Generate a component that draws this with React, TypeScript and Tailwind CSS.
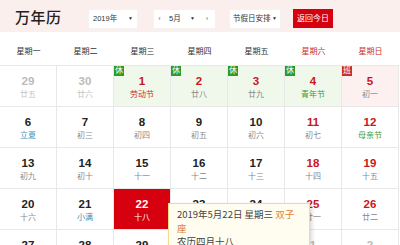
import React from "react";

type Day = {
  n: number;
  l: string;
  muted?: boolean;
  fest?: "red" | "green" | "teal";
  rest?: boolean;
  work?: boolean;
  today?: boolean;
};

const weeks: Day[][] = [
  [
    { n: 29, l: "廿五", muted: true },
    { n: 30, l: "廿六", muted: true },
    { n: 1, l: "劳动节", fest: "red", rest: true },
    { n: 2, l: "廿八", rest: true },
    { n: 3, l: "廿九", rest: true },
    { n: 4, l: "青年节", fest: "green", rest: true },
    { n: 5, l: "初一", work: true },
  ],
  [
    { n: 6, l: "立夏", fest: "teal" },
    { n: 7, l: "初三" },
    { n: 8, l: "初四" },
    { n: 9, l: "初五" },
    { n: 10, l: "初六" },
    { n: 11, l: "初七" },
    { n: 12, l: "母亲节", fest: "green" },
  ],
  [
    { n: 13, l: "初九" },
    { n: 14, l: "初十" },
    { n: 15, l: "十一" },
    { n: 16, l: "十二" },
    { n: 17, l: "十三" },
    { n: 18, l: "十四" },
    { n: 19, l: "十五" },
  ],
  [
    { n: 20, l: "十六" },
    { n: 21, l: "小满", fest: "teal" },
    { n: 22, l: "十八", today: true },
    { n: 23, l: "十九" },
    { n: 24, l: "二十" },
    { n: 25, l: "廿一" },
    { n: 26, l: "廿二" },
  ],
  [
    { n: 27, l: "廿三" },
    { n: 28, l: "廿四" },
    { n: 29, l: "廿五" },
    { n: 30, l: "廿六" },
    { n: 31, l: "廿七" },
    { n: 1, l: "儿童节", muted: true },
    { n: 2, l: "廿九", muted: true },
  ],
];

const weekNames = ["星期一", "星期二", "星期三", "星期四", "星期五", "星期六", "星期日"];

const festColor = {
  red: "text-[#c9302c]",
  green: "text-[#3c9a3c]",
  teal: "text-[#3a8fb5]",
};

function DayCell({ d, col }: { d: Day; col: number }) {
  const weekend = col >= 5;
  let bg = "bg-white";
  if (d.rest) bg = "bg-[#eff8ea]";
  if (d.work) bg = "bg-[#fdf0f0]";
  if (d.today) bg = "bg-[#d7000f]";

  let numColor = "text-[#222]";
  if (weekend || d.rest) numColor = "text-[#c8161d]";
  if (d.muted) numColor = "text-[#bbb]";
  if (d.today) numColor = "text-white";

  let lunarColor = "text-[#888]";
  if (d.fest) lunarColor = festColor[d.fest];
  if (d.muted) lunarColor = "text-[#c4c4c4]";
  if (d.today) lunarColor = "text-white";

  return (
    <div className={`relative h-[41px] border-r border-b border-[#e8e8e8] flex flex-col items-center pt-[8px] ${bg}`}>
      {d.rest && (
        <span className="absolute left-0 top-0 w-[10px] h-[10px] bg-[#2b9b2b] text-white text-[8px] leading-[10px] text-center">
          休
        </span>
      )}
      {d.work && (
        <span className="absolute left-0 top-0 w-[10px] h-[10px] bg-[#c9302c] text-white text-[8px] leading-[10px] text-center">
          班
        </span>
      )}
      <span className={`text-[11.5px] leading-[14px] font-bold ${numColor}`}>{d.n}</span>
      <span className={`mt-[2px] text-[8px] leading-[10px] ${lunarColor}`}>{d.l}</span>
    </div>
  );
}

export default function App() {
  return (
    <div
      className="relative w-[400px] h-[245px] overflow-hidden bg-white text-[#333]"
      style={{ fontFamily: '"Liberation Sans", "Noto Sans CJK SC", sans-serif' }}
    >
      <div className="h-[32px] bg-[#fbefed] flex items-center pl-[15px] pt-[5px]">
        <h1 className="text-[15px] font-medium text-[#222] tracking-[0.5px] w-[73px]">万年历</h1>
        <div className="w-[50px] h-[20px] bg-white border border-[#f3f3f3] flex items-center justify-between px-[4px] text-[7.5px]">
          <span>2019年</span>
          <span className="text-[5px]">▼</span>
        </div>
        <div className="ml-[15px] h-[20px] flex items-center bg-white border border-[#f3f3f3] text-[7.5px]">
          <span className="w-[11px] text-center text-[#777]">‹</span>
          <div className="w-[34px] flex items-center justify-between px-[4px]">
            <span>5月</span>
            <span className="text-[5px]">▼</span>
          </div>
          <span className="w-[16px] text-center text-[#777]">›</span>
        </div>
        <div className="ml-[13px] w-[52px] h-[20px] bg-white border border-[#f3f3f3] flex items-center justify-between px-[3px] text-[7.5px]">
          <span>节假日安排</span>
          <span className="text-[5px]">▼</span>
        </div>
        <button className="ml-[12px] w-[40px] h-[19px] bg-[#d7000f] text-white text-[8px] flex items-center justify-center">
          返回今日
        </button>
      </div>

      <div className="w-[399px]">
        <div className="grid grid-cols-[repeat(7,57px)] h-[34px] border-b border-[#e8e8e8]">
          {weekNames.map((w, i) => (
            <div
              key={w}
              className={`flex items-center justify-center pt-[7px] text-[8px] ${i >= 5 ? "text-[#c9302c]" : "text-[#333]"}`}
            >
              {w}
            </div>
          ))}
        </div>
        {weeks.map((row, r) => (
          <div key={r} className="grid grid-cols-[repeat(7,57px)]">
            {row.map((d, c) => (
              <DayCell key={c} d={d} col={c} />
            ))}
          </div>
        ))}
      </div>

      <div className="absolute left-[168px] top-[203px] w-[142px] h-[60px] bg-[#fffdf0] border border-[#eedd8c] shadow-[2px_2px_4px_rgba(0,0,0,0.15)] pl-[8px] pr-[8px] pt-[4px] text-[9.5px] leading-[13.5px] text-[#444] z-10">
        <p style={{ fontFamily: '"Noto Sans CJK SC", sans-serif' }}>
          2019年5月22日 星期三 <span className="text-[#e0813a]">双子座</span>
        </p>
        <p style={{ fontFamily: '"Noto Sans CJK SC", sans-serif' }}>农历四月十八</p>
      </div>
    </div>
  );
}
